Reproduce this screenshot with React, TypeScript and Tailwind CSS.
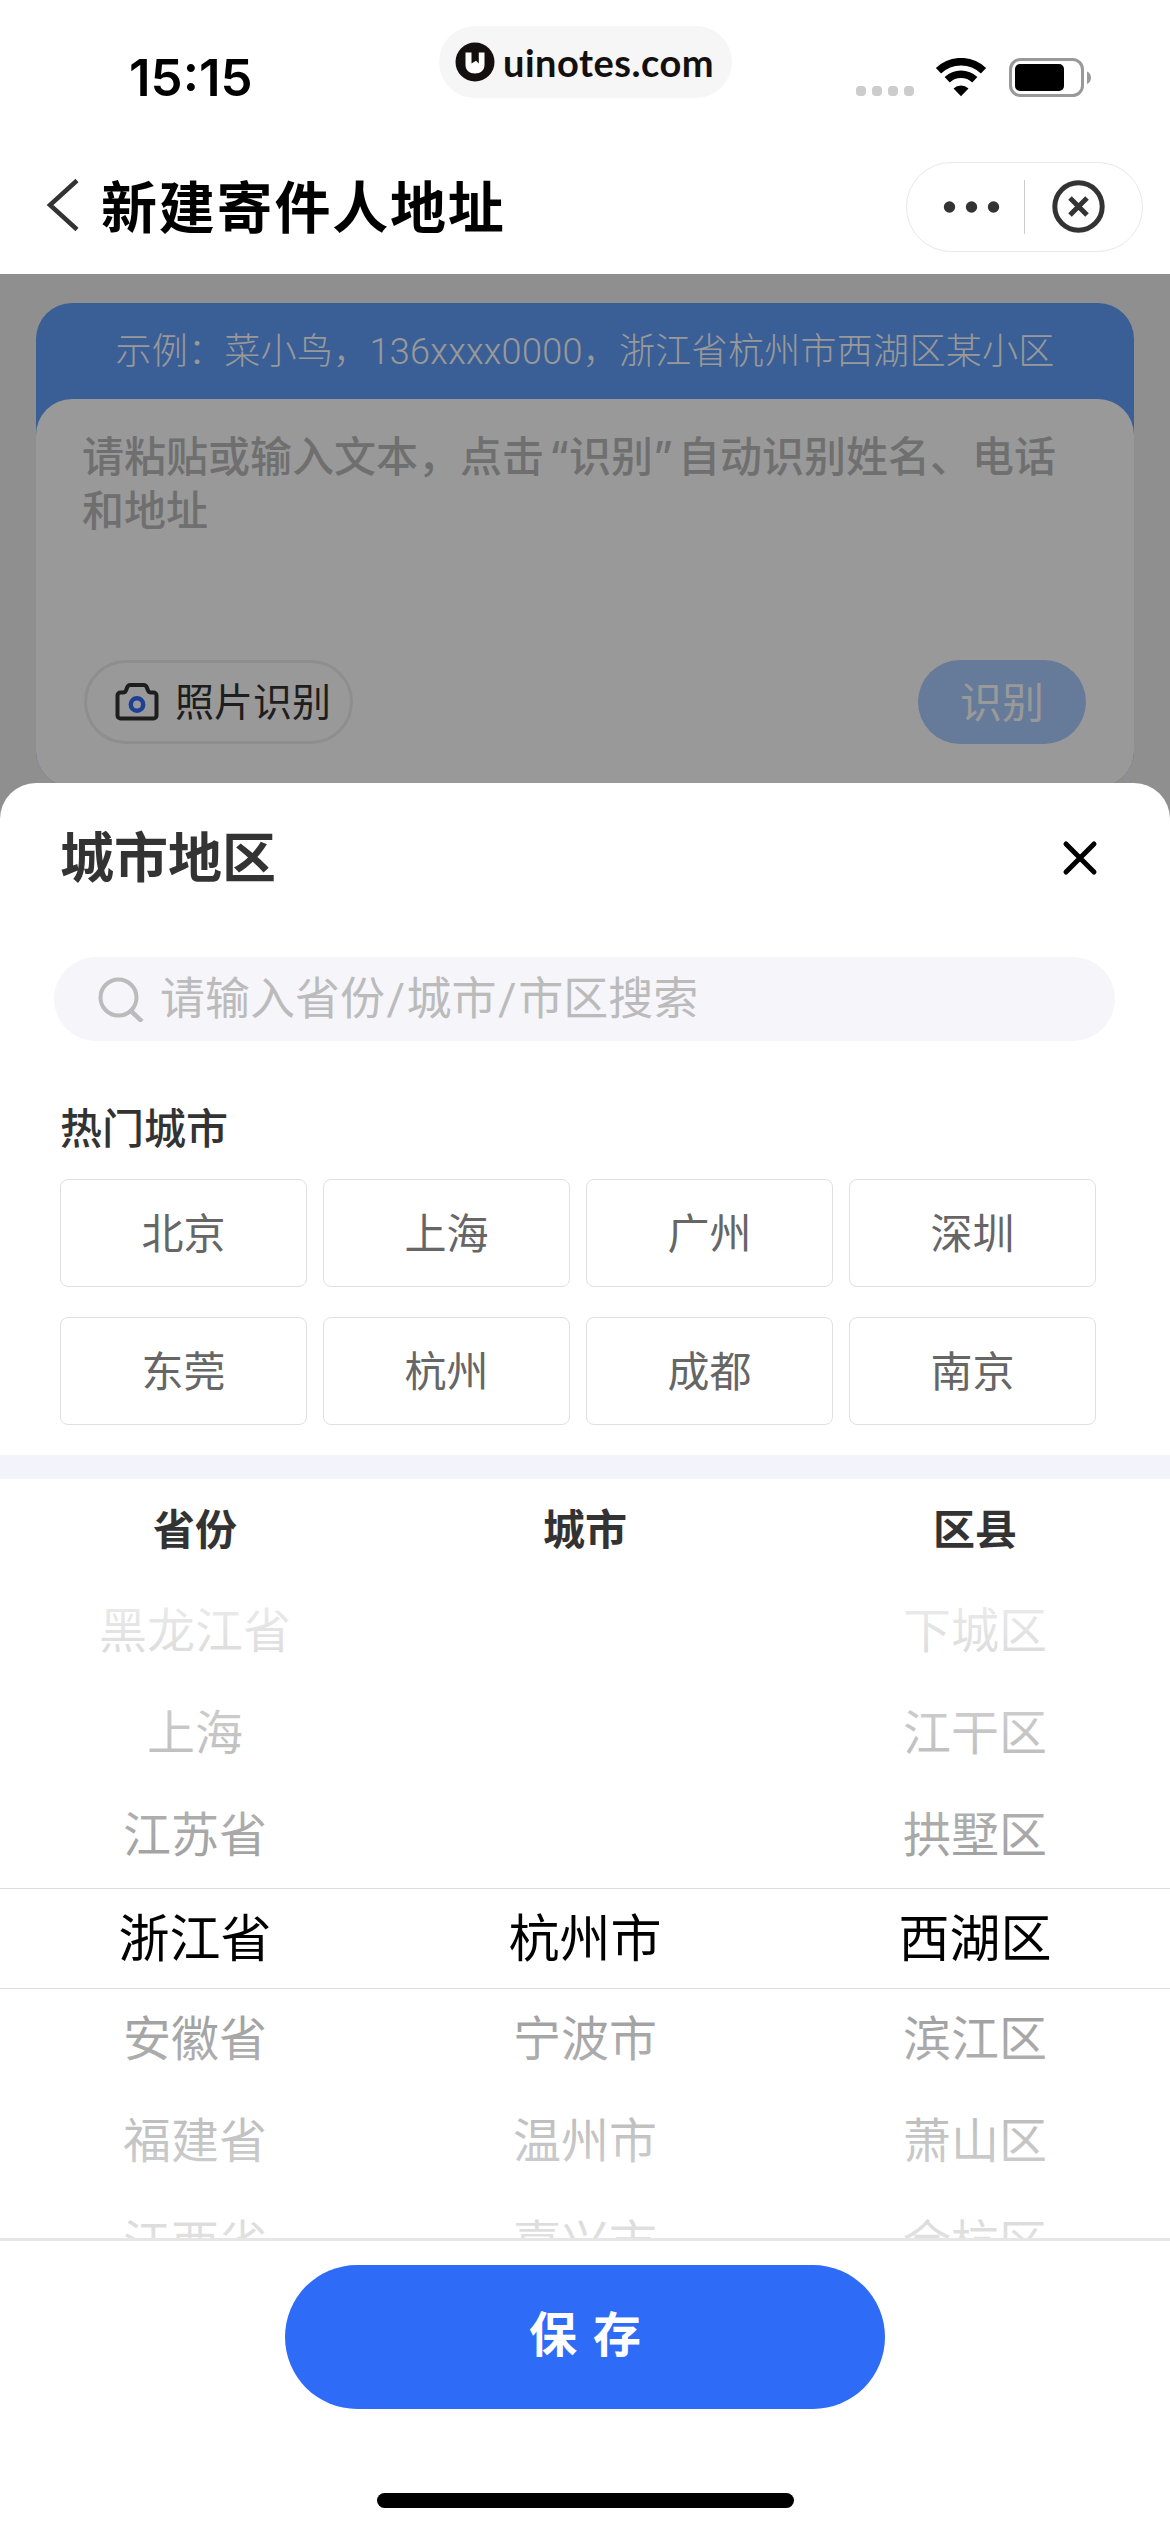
const hotCities = ["北京", "上海", "广州", "深圳", "东莞", "杭州", "成都", "南京"];

const columns = [
  {
    title: "省份",
    before: ["黑龙江省", "上海", "江苏省"],
    selected: "浙江省",
    after: ["安徽省", "福建省", "江西省"],
  },
  {
    title: "城市",
    before: ["", "", ""],
    selected: "杭州市",
    after: ["宁波市", "温州市", "嘉兴市"],
  },
  {
    title: "区县",
    before: ["下城区", "江干区", "拱墅区"],
    selected: "西湖区",
    after: ["滨江区", "萧山区", "余杭区"],
  },
];

function StatusBar() {
  return (
    <div className="flex h-[136px] items-start">
      <div className="ml-[129px] mt-[47px] w-[310px] font-[Inter] text-[51px] font-semibold leading-[62px]">15:15</div>
      <div className="mt-[26px] flex h-[72px] w-[293px] items-center rounded-full bg-[#f6f6f6] pl-4 text-[#14100f]">
        <svg width="40" height="40" viewBox="0 0 40 40">
          <circle cx="20" cy="20" r="19.5" fill="#14100f" />
          <path d="M10.5 10.5h6v11l4.500-2.800 2.800 2.800v-11h5.700v12.500c0 5-4 8.500-9.500 8.500s-9.500-3.500-9.500-8.500z" fill="#fff" />
        </svg>
        <span className="ml-[8px] font-[Lato] text-[38px] font-bold leading-[44px] tracking-[0.500px]">uinotes.com</span>
      </div>
      <div className="ml-auto mr-[78px] mt-[58px] flex h-10">
        <div className="flex gap-[6px] pt-[28px]">
          {[0, 1, 2, 3].map((i) => (
            <span key={i} className="size-[10px] rounded-[4px] bg-[#ccc]" />
          ))}
        </div>
        <svg className="ml-[21px]" width="52" height="40" viewBox="0 0 52 40">
          <path d="M3.500 12.700a32.500 32.500 0 0 1 45 0" fill="none" stroke="#000" strokeWidth="7.500" />
          <path d="M12.200 21.700a20 20 0 0 1 27.600 0" fill="none" stroke="#000" strokeWidth="7.500" />
          <path d="M18.500 30.500a11 11 0 0 1 15 0L26 38.200z" fill="#000" />
        </svg>
        <svg className="ml-[22px]" width="83" height="40" viewBox="0 0 83 40">
          <rect x="1.500" y="1.500" width="72" height="36" rx="10" fill="none" stroke="#999" strokeWidth="3" />
          <rect x="6" y="6" width="49" height="27" rx="5" fill="#000" />
          <path d="M78 13.500c5.300 2 5.300 10.500 0 12.500z" fill="#999" />
        </svg>
      </div>
    </div>
  );
}

function NavBar() {
  return (
    <div className="flex h-[138px] items-center justify-between pl-[46px] pr-[27px]">
      <div className="flex items-center">
        <svg width="34" height="54" viewBox="0 0 34 54">
          <path d="M31 2.500L4 27l27 24.500" fill="none" stroke="#333" strokeWidth="4.500" />
        </svg>
        <h1 className="ml-[21px] pt-[7px] text-[56px] font-bold leading-[70px] tracking-[1.800px] text-black">新建寄件人地址</h1>
      </div>
      <div className="mt-1 flex h-[90px] w-[237px] items-center rounded-full border border-[#e8e8e8]">
        <svg width="235" height="88" viewBox="0 0 235 88">
          <g fill="#333">
            <circle cx="42.500" cy="44" r="5.700" />
            <circle cx="64.500" cy="44" r="5.700" />
            <circle cx="86.500" cy="44" r="5.700" />
          </g>
          <path d="M117.500 17v54" stroke="#ccc" />
          <circle cx="171.500" cy="43.500" r="23.700" fill="none" stroke="#333" strokeWidth="5" />
          <path d="M163 35l17 17m0-17l-17 17" stroke="#333" strokeWidth="5" />
        </svg>
      </div>
    </div>
  );
}

function AddressForm() {
  return (
    <div className="relative h-[560px] bg-[#eeeef1] px-9 pt-[29px]">
      <div className="h-[484px] rounded-[36px] bg-[#619dfa]">
        <div className="flex h-24 items-center justify-center whitespace-nowrap pt-[2px] text-[36px] font-light tracking-[0.300px] text-white">
          示例：菜小鸟，136xxxx0000，浙江省杭州市西湖区某小区
        </div>
        <div className="flex h-[388px] flex-col justify-between rounded-[36px] bg-white px-12 pb-[43px] pt-[31px]">
          <p className="-ml-[2px] text-[42px] font-medium leading-[54px] text-[#bababa]">
            请粘贴或输入文本，点击
            <span className="inline-block w-[25px] text-right font-[Inter]">“</span>
            识别
            <span className="inline-block w-[25px] text-left font-[Inter]">”</span>
            自动识别姓名、电话
            <br />
            和地址
          </p>
          <div className="flex items-center justify-between">
            <button className="flex h-[84px] w-[269px] items-center rounded-full border-[3px] border-[#ededed] pl-7 text-[39px] text-[#333]">
              <svg width="44" height="40" viewBox="0 0 44 40">
                <path
                  d="M5.500 10.500H8c2 0 2.800-1 3.300-2.800l.8-2.200c.6-1.700 1.600-2.500 3.200-2.500h13.400c1.600 0 2.600.8 3.200 2.500l.8 2.200c.5 1.800 1.300 2.800 3.300 2.800h2.500a3 3 0 0 1 3 3v20a3 3 0 0 1-3 3h-33a3 3 0 0 1-3-3v-20a3 3 0 0 1 3-3z"
                  fill="none"
                  stroke="#333"
                  strokeWidth="4"
                />
                <circle cx="22" cy="22.500" r="6.200" fill="none" stroke="#2e6cf7" strokeWidth="4.500" />
              </svg>
              <span className="ml-[16px] whitespace-nowrap pt-[2px]">照片识别</span>
            </button>
            <button className="h-[84px] w-[168px] rounded-full bg-[#aacbff] pt-[2px] text-[42px] text-white">识别</button>
          </div>
        </div>
      </div>
      {/* dimmed backdrop behind the sheet */}
      <div className="absolute inset-0 bg-black/40" />
    </div>
  );
}

function PickerItem({ label }: { label: string }) {
  return <div className="flex h-[102px] items-center justify-center pt-[3px] text-[48px]">{label}</div>;
}

function RegionPicker() {
  return (
    <div className="relative h-[659px] overflow-hidden text-black">
      <div className="grid grid-cols-3">
        {columns.map((col) => (
          <div key={col.title}>
            {col.before.map((label, i) => (
              <PickerItem key={i} label={label} />
            ))}
            <div className="flex h-[102px] items-center justify-center pt-[8px] text-[51px]">{col.selected}</div>
            {col.after.map((label) => (
              <PickerItem key={label} label={label} />
            ))}
          </div>
        ))}
      </div>
      <div className="absolute inset-x-0 top-0 h-[310px] border-b border-[#dcdcdc] bg-linear-to-b from-white/95 to-white/60" />
      <div className="absolute inset-x-0 top-[409px] h-[310px] border-t border-[#dcdcdc] bg-linear-to-t from-white/95 to-white/60" />
    </div>
  );
}

function CitySheet() {
  return (
    <div className="absolute inset-x-0 bottom-0 flex h-[1749px] flex-col rounded-t-[36px] bg-white">
      <div className="flex h-[174px] items-center justify-between pb-[24px] pl-[60px] pr-[72px]">
        <h2 className="pt-[2px] text-[54px] font-bold text-[#333]">城市地区</h2>
        <svg width="36" height="36" viewBox="0 0 36 36">
          <path d="M4 4l28 28m0-28L4 32" stroke="#000" strokeWidth="5" strokeLinecap="round" />
        </svg>
      </div>

      <div className="ml-[54px] flex h-[84px] w-[1061px] items-center rounded-full bg-[#f5f5fa] pl-11 text-[45px] text-[#bbb]">
        <svg width="46" height="46" viewBox="0 0 46 46">
          <circle cx="20.500" cy="21.500" r="18" fill="none" stroke="#bbb" strokeWidth="4" />
          <path d="M33 35l11 10.500" stroke="#bbb" strokeWidth="4.500" />
        </svg>
        <span className="ml-4 pt-[2px]">
          请输入省份<span className="mx-[1.500px]">/</span>城市<span className="mx-[1.500px]">/</span>市区搜索
        </span>
      </div>

      <h3 className="ml-[60px] mt-[59px] text-[42px] font-medium leading-[60px] text-[#333]">热门城市</h3>
      <div className="ml-[60px] mt-[19px] grid w-[1036px] grid-cols-4 gap-x-4 gap-y-[30px]">
        {hotCities.map((city) => (
          <button key={city} className="h-[108px] rounded-lg border-[1.500px] border-[#e0e0e0] pt-[2px] text-[42px] text-[#666]">
            {city}
          </button>
        ))}
      </div>

      <div className="mt-[30px] h-6 bg-[#f2f3fb]" />

      <div className="grid h-[100px] grid-cols-3 items-center pt-[3px] text-center text-[42px] font-bold text-[#333]">
        {columns.map((col) => (
          <span key={col.title}>{col.title}</span>
        ))}
      </div>
      <RegionPicker />

      <div className="flex flex-1 flex-col items-center border-t-[3px] border-[#e6e6e6] pt-6">
        <button className="h-36 w-[600px] rounded-full bg-[#2e6cf7] pb-[2px] text-[48px] font-bold text-white [word-spacing:4px]">
          保 存
        </button>
        <div className="mt-[84px] h-[15px] w-[417px] rounded-full bg-black" />
      </div>
    </div>
  );
}

export default function App() {
  return (
    <div className="relative h-[2532px] w-[1170px] overflow-hidden bg-white font-[Roboto,'Noto_Sans_CJK_SC',sans-serif]">
      <StatusBar />
      <NavBar />
      <AddressForm />
      <CitySheet />
    </div>
  );
}
